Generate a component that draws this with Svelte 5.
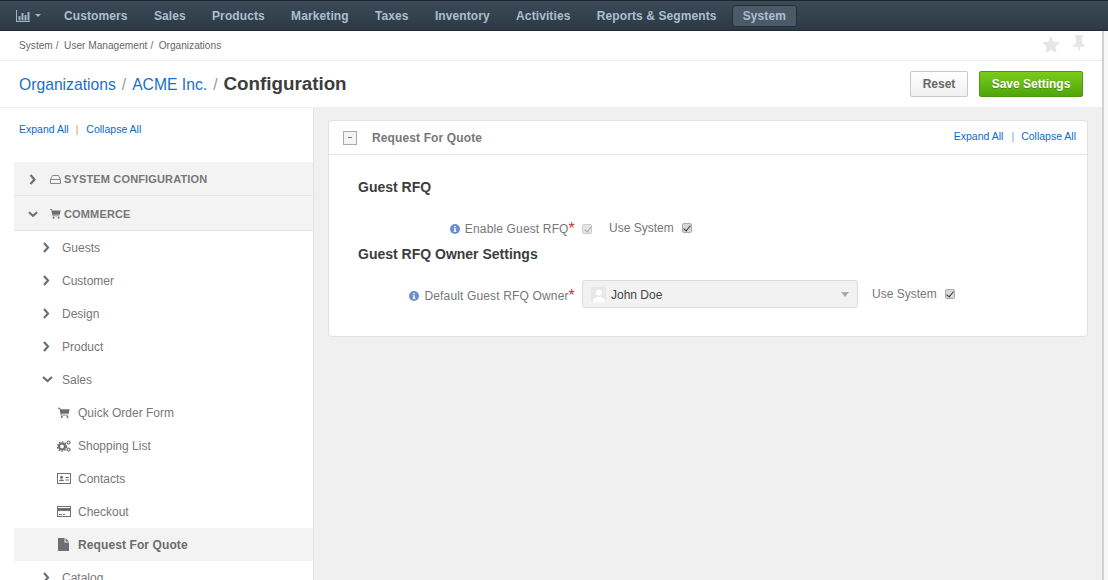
<script>
    const navItems = ['Customers', 'Sales', 'Products', 'Marketing', 'Taxes', 'Inventory', 'Activities', 'Reports & Segments'];

    const subItems = [
        { label: 'Guests', open: false },
        { label: 'Customer', open: false },
        { label: 'Design', open: false },
        { label: 'Product', open: false },
        { label: 'Sales', open: true }
    ];
</script>

<div class="page">
    <header class="topbar">
        <div class="dash">
            <svg width="14" height="12" viewBox="0 0 14 12">
                <path d="M0 0h1v11h13v1H0z M2.500 6h2v4.500h-2z M5.500 3h2v7.500h-2z M8.500 5h2v5.500h-2z M11.500 2h2v8.500h-2z" fill="#9fb4c6"/>
            </svg>
            <span class="caret"></span>
        </div>
        <nav class="mainnav">
            {#each navItems as item}
                <span class="navitem">{item}</span>
            {/each}
            <span class="navitem active">System</span>
        </nav>
    </header>

    <div class="shell">
        <div class="main">
            <div class="crumbs">
                <div class="crumbtext">
                    <span>System</span><i>/</i><span>User Management</span><i>/</i><span>Organizations</span>
                </div>
                <div class="crumbicons">
                    <svg width="18" height="17" viewBox="0 0 18 17"><path d="M9 0l2.700 5.700 6.300.8-4.600 4.300 1.200 6.200L9 14l-5.600 3 1.200-6.200L0 6.500l6.300-.8z" fill="#e6e6e6"/></svg>
                    <svg width="12" height="18" viewBox="0 0 12 18"><path d="M2 0h8v1.500L9 2.500V8l3 3v1H7l-1 6-1-6H0v-1l3-3V2.500L2 1.500z" fill="#e6e6e6"/></svg>
                </div>
            </div>

            <div class="titlebar">
                <h1>
                    <a href="#a">Organizations</a><span class="sep">/</span><a href="#a">ACME Inc.</a><span class="sep">/</span><b>Configuration</b>
                </h1>
                <div class="actions">
                    <button class="btn">Reset</button>
                    <button class="btn save">Save Settings</button>
                </div>
            </div>

            <div class="body">
                <aside class="side">
                    <div class="sidelinks"><a href="#a">Expand All</a><span>|</span><a href="#a">Collapse All</a></div>
                    <div class="tree">
                        <div class="group">
                            <svg class="chev" width="9" height="11" viewBox="0 0 9 11"><path d="M2 1l4 4.500L2 10" fill="none" stroke="#6f6f6f" stroke-width="2.200"/></svg>
                            <svg class="gico" width="11" height="9" viewBox="0 0 11 9"><path d="M2.500.5h6l2 4v4H.500v-4z M.500 4.500h10" fill="none" stroke="#8a8a8a" stroke-width="1"/></svg>
                            <span>SYSTEM CONFIGURATION</span>
                        </div>
                        <div class="group second">
                            <svg class="chev" width="11" height="9" viewBox="0 0 11 9"><path d="M1 2l4.500 4L10 2" fill="none" stroke="#6f6f6f" stroke-width="2.200"/></svg>
                            <svg class="gico" width="11" height="10" viewBox="0 0 14 12"><path d="M0 0h2.500l.5 1.500h10.500L12.500 7H4l.3 1H12v1H3.300L1.700 1H0z" fill="#6f6f6f"/><circle cx="4.500" cy="10.700" r="1.200" fill="#6f6f6f"/><circle cx="11" cy="10.700" r="1.200" fill="#6f6f6f"/></svg>
                            <span>COMMERCE</span>
                        </div>
                        {#each subItems as sub}
                            <div class="row">
                                {#if sub.open}
                                    <svg class="chev" width="11" height="9" viewBox="0 0 11 9"><path d="M1 2l4.500 4L10 2" fill="none" stroke="#6f6f6f" stroke-width="2.200"/></svg>
                                {:else}
                                    <svg class="chev" width="11" height="11" viewBox="0 0 11 11"><path d="M2 1l4 4.500L2 10" fill="none" stroke="#6f6f6f" stroke-width="2.200"/></svg>
                                {/if}
                                <span>{sub.label}</span>
                            </div>
                        {/each}
                        <div class="leaf">
                            <svg width="14" height="12" viewBox="-1 -1 16 14"><path d="M0 0h2.500l.5 1.500h10.500L12.500 7H4l.3 1H12v1H3.300L1.700 1H0z" fill="#6f6f6f"/><circle cx="4.500" cy="10.700" r="1.200" fill="#6f6f6f"/><circle cx="11" cy="10.700" r="1.200" fill="#6f6f6f"/></svg>
                            <span>Quick Order Form</span>
                        </div>
                        <div class="leaf">
                            <svg width="14" height="12" viewBox="0 0 14 12"><circle cx="5" cy="6.500" r="3" fill="none" stroke="#6f6f6f" stroke-width="2.200"/><circle cx="5" cy="6.500" r="4.600" fill="none" stroke="#6f6f6f" stroke-width="1.200" stroke-dasharray="1.500 1.500"/><circle cx="11.500" cy="2.500" r="1.500" fill="none" stroke="#6f6f6f" stroke-width="1.200"/><circle cx="11.500" cy="9.500" r="1.500" fill="none" stroke="#6f6f6f" stroke-width="1.200"/></svg>
                            <span>Shopping List</span>
                        </div>
                        <div class="leaf">
                            <svg width="14" height="11" viewBox="0 0 14 11"><rect x=".5" y=".5" width="13" height="10" fill="none" stroke="#6f6f6f"/><circle cx="4.500" cy="4.200" r="1.500" fill="#6f6f6f"/><path d="M2 8c0-2 5-2 5 0z M8.500 4h3.500v1H8.500z M8.500 6.500h3.500v1H8.500z" fill="#6f6f6f"/></svg>
                            <span>Contacts</span>
                        </div>
                        <div class="leaf">
                            <svg width="14" height="11" viewBox="0 0 14 11"><rect x=".5" y=".5" width="13" height="10" fill="none" stroke="#6f6f6f"/><path d="M0 2h14v3H0z M2 8h3v1H2z M6 8h2v1H6z" fill="#6f6f6f"/></svg>
                            <span>Checkout</span>
                        </div>
                        <div class="leaf current">
                            <svg width="14" height="13" viewBox="0 0 14 13"><path d="M1 0h6.500v4.500H12V13H1z M8.500 0L12 3.500H8.500z" fill="#6f6f6f"/></svg>
                            <span>Request For Quote</span>
                        </div>
                        <div class="row">
                            <svg class="chev" width="11" height="11" viewBox="0 0 11 11"><path d="M2 1l4 4.500L2 10" fill="none" stroke="#6f6f6f" stroke-width="2.200"/></svg>
                            <span>Catalog</span>
                        </div>
                    </div>
                </aside>

                <main class="content">
                    <section class="card">
                        <div class="cardhead">
                            <span class="minus"></span>
                            <span class="cardtitle">Request For Quote</span>
                            <div class="headlinks"><a href="#a">Expand All</a><span>|</span><a href="#a">Collapse All</a></div>
                        </div>
                        <div class="cardbody">
                            <h4 class="first">Guest RFQ</h4>
                            <div class="field one">
                                <label class="lbl">
                                    <svg width="10" height="10" viewBox="0 0 10 10"><circle cx="5" cy="5" r="5" fill="#6a8fcf"/><path d="M4.200 2h1.600v1.300H4.200z M3.700 4.200h2.100v3h.6v.8H3.700v-.8h.5V5h-.5z" fill="#fff"/></svg>
                                    Enable Guest RFQ<em>*</em>
                                </label>
                                <span class="check disabled"></span>
                                <span class="use">Use System</span>
                                <span class="check"></span>
                            </div>
                            <h4>Guest RFQ Owner Settings</h4>
                            <div class="field two">
                                <label class="lbl">
                                    <svg width="10" height="10" viewBox="0 0 10 10"><circle cx="5" cy="5" r="5" fill="#6a8fcf"/><path d="M4.200 2h1.600v1.300H4.200z M3.700 4.200h2.100v3h.6v.8H3.700v-.8h.5V5h-.5z" fill="#fff"/></svg>
                                    Default Guest RFQ Owner<em>*</em>
                                </label>
                                <div class="select">
                                    <span class="avatar">
                                        <svg width="14" height="14" viewBox="0 0 14 14"><circle cx="7" cy="4.500" r="3" fill="#fff"/><path d="M1 14c0-4 3-5 6-5s6 1 6 5z" fill="#fff"/></svg>
                                    </span>
                                    <span class="owner">John Doe</span>
                                    <span class="selcaret"></span>
                                </div>
                                <span class="use">Use System</span>
                                <span class="check"></span>
                            </div>
                        </div>
                    </section>
                </main>
            </div>
        </div>
        <div class="vstrip"></div>
    </div>
</div>

<style>
    :global(body) {
        margin: 0;
        overflow: hidden;
        font-family: "Liberation Sans", Arial, sans-serif;
        color: #777;
    }
    .page {
        width: 1108px;
        height: 580px;
        display: flex;
        flex-direction: column;
        overflow: hidden;
        background: #fff;
    }
    a {
        color: #0b6bc4;
        text-decoration: none;
    }

    .topbar {
        height: 31px;
        box-sizing: border-box;
        display: flex;
        align-items: center;
        background: linear-gradient(#3b4a57, #2d3a45);
        border-top: 1px solid #1c252c;
        border-bottom: 1px solid #1f2930;
        flex: none;
    }
    .dash {
        width: 64px;
        box-sizing: border-box;
        padding-left: 16px;
        display: flex;
        align-items: center;
        gap: 5px;
    }
    .caret {
        width: 0;
        height: 0;
        border: 3px solid transparent;
        border-top: 3px solid #9fb4c6;
        border-bottom: 0;
    }
    .mainnav {
        display: flex;
        align-items: center;
    }
    .navitem {
        font-size: 12px;
        font-weight: bold;
        letter-spacing: .1px;
        color: #a9bfd0;
        padding: 0 13.150px;
        line-height: 22px;
        white-space: nowrap;
    }
    .navitem:first-child {
        padding-left: 0;
    }
    .navitem.active {
        margin-left: 2.500px;
        padding: 0 9.500px;
        background: #4c5a68;
        border: 1px solid #242e36;
        border-radius: 3px;
        line-height: 20px;
    }

    .shell {
        flex: 1;
        display: flex;
        min-height: 0;
    }
    .main {
        width: 1102px;
        flex: none;
        display: flex;
        flex-direction: column;
        min-height: 0;
    }
    .vstrip {
        flex: 1;
        border-left: 2px solid #d2d2d2;
        background: #f8f8f8;
    }

    .crumbs {
        height: 30px;
        flex: none;
        box-sizing: border-box;
        border-bottom: 1px solid #eee;
        display: flex;
        align-items: center;
        justify-content: space-between;
        padding: 0 17px 0 19px;
    }
    .crumbtext {
        font-size: 10.150px;
        color: #666;
    }
    .crumbtext i {
        font-style: normal;
        margin: 0 5.500px 0 3px;
    }
    .crumbicons {
        display: flex;
        align-items: center;
        gap: 13px;
        margin-top: -3px;
    }

    .titlebar {
        height: 46px;
        flex: none;
        box-sizing: border-box;
        display: flex;
        align-items: center;
        justify-content: space-between;
        padding: 0 19px;
    }
    h1 {
        margin: 0;
        font-size: 15.700px;
        font-weight: normal;
        color: #999;
    }
    h1 a {
        color: #1a6fc9;
    }
    h1 b {
        font-size: 18.800px;
        color: #3d3d3d;
    }
    .sep {
        margin: 0 6px;
    }
    .actions {
        display: flex;
        gap: 11px;
    }
    .btn {
        width: 58px;
        height: 26px;
        box-sizing: border-box;
        padding: 0;
        border: 1px solid #c9c9c9;
        border-radius: 2px;
        background: linear-gradient(#fff, #f0f0f0);
        color: #666;
        font: bold 12px "Liberation Sans", Arial, sans-serif;
    }
    .btn.save {
        width: 104px;
        background: linear-gradient(#7acc1a, #4fa50d);
        border-color: #4a9a10;
        color: #fff;
        text-shadow: 0 1px 0 #4a8a10;
    }

    .body {
        flex: 1;
        display: flex;
        min-height: 0;
        border-top: 1px solid #eee;
    }
    .side {
        width: 314px;
        flex: none;
        box-sizing: border-box;
        padding-left: 14px;
        border-right: 1px solid #e4e4e4;
        background: #fff;
    }
    .sidelinks {
        height: 54px;
        box-sizing: border-box;
        padding: 15px 0 0 5px;
        font-size: 10.500px;
    }
    .sidelinks span {
        margin: 0 8px 0 7px;
        color: #e0a040;
    }
    .group {
        height: 34px;
        box-sizing: border-box;
        padding-top: 1px;
        display: flex;
        align-items: center;
        background: #f3f3f3;
        border-bottom: 1px solid #e6e6e6;
        font-size: 11px;
        font-weight: bold;
        color: #777;
        letter-spacing: .15px;
    }
    .group.second {
        height: 35px;
        padding-top: 2px;
    }
    .group .chev {
        margin-left: 14px;
        width: 10px;
    }
    .group .gico {
        margin-left: 12px;
        margin-right: 3px;
    }
    .row, .leaf {
        height: 33px;
        display: flex;
        align-items: center;
        font-size: 12px;
        color: #777;
    }
    .row .chev {
        margin-left: 28px;
        margin-right: 9px;
    }
    .leaf {
        padding-left: 43px;
    }
    .leaf svg {
        margin-right: 7px;
        flex: none;
    }
    .leaf.current {
        background: #f3f3f3;
        font-weight: bold;
        color: #6b6b6b;
        letter-spacing: .1px;
    }

    .content {
        flex: 1;
        background: #f0f0f0;
        padding: 12px 14px 0 14px;
        min-width: 0;
    }
    .card {
        height: 217px;
        box-sizing: border-box;
        background: #fff;
        border: 1px solid #e2e2e2;
        border-radius: 4px;
    }
    .cardhead {
        height: 34px;
        box-sizing: border-box;
        display: flex;
        align-items: center;
        border-bottom: 1px solid #e6e6e6;
        padding: 0 11px 0 14px;
    }
    .minus {
        width: 12px;
        height: 12px;
        border: 1px solid #aaa;
        background: linear-gradient(#777, #777) center / 4px 1px no-repeat #f4f4f4;
        flex: none;
    }
    .cardtitle {
        margin-left: 15px;
        font-size: 12px;
        font-weight: bold;
        color: #777;
        letter-spacing: .12px;
    }
    .headlinks {
        margin-left: auto;
        font-size: 10.500px;
        margin-top: -4px;
    }
    .headlinks span {
        margin: 0 7px 0 8px;
        color: #6a9fd8;
    }
    .cardbody {
        padding: 24px 0 0 29px;
    }
    h4 {
        margin: 0;
        font-size: 14px;
        line-height: 16px;
        font-weight: bold;
        color: #3d3d3d;
    }
    .field {
        display: flex;
        align-items: center;
        font-size: 12px;
    }
    .field.one {
        height: 16px;
        margin: 26px 0 9px;
    }
    .field.two {
        height: 28px;
        margin-top: 18px;
    }
    .lbl {
        width: 217px;
        box-sizing: border-box;
        padding-right: 0;
        display: flex;
        align-items: center;
        justify-content: flex-end;
        gap: 5px;
        white-space: nowrap;
        color: #777;
        letter-spacing: .15px;
    }
    .two .lbl {
        margin-top: 4px;
    }
    .lbl em {
        font-style: normal;
        color: #c23b3b;
        margin-left: -5px;
        font-size: 16px;
        line-height: 12px;
    }
    .check {
        width: 10px;
        height: 10px;
        box-sizing: border-box;
        flex: none;
        margin-left: 12px;
        border: 1px solid #aaa;
        border-radius: 2px;
        background: #d8d8d8;
        position: relative;
    }
    .check::after {
        content: "";
        position: absolute;
        left: 2.500px;
        top: 0;
        width: 3px;
        height: 6px;
        border: solid #333;
        border-width: 0 1.500px 1.500px 0;
        transform: rotate(40deg);
    }
    .check.disabled {
        margin-left: 7px;
        border-color: #ccc;
        background: #e6e6e6;
    }
    .check.disabled::after {
        border-color: #aaa;
    }
    .use {
        margin-left: 17px;
        margin-bottom: 2px;
        color: #777;
    }
    .two .use {
        margin-left: 14px;
        margin-bottom: 0;
    }
    .one .check:last-child {
        margin-left: 8px;
        margin-bottom: 3px;
    }
    .two .check:last-child {
        margin-left: 8px;
        margin-bottom: 1px;
    }
    .select {
        width: 276px;
        height: 28px;
        box-sizing: border-box;
        margin-left: 7px;
        display: flex;
        align-items: center;
        padding: 0 8px 0 8px;
        border: 1px solid #ddd;
        border-radius: 3px;
        background: #f2f2f2;
    }
    .avatar {
        width: 15px;
        height: 15px;
        background: #e8e8e8;
        display: flex;
        align-items: flex-end;
        justify-content: center;
        flex: none;
    }
    .owner {
        margin-top: 1px;
        margin-left: 5px;
        color: #444;
    }
    .selcaret {
        margin-left: auto;
        width: 0;
        height: 0;
        border: 4.500px solid transparent;
        border-top: 5px solid #aaa;
        border-bottom: 0;
    }
</style>
